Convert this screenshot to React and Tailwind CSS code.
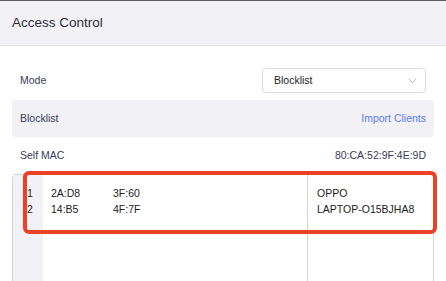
import React from 'react';

const clients = [
  { no: 1, head: '2A:D8', tail: '3F:60', name: 'OPPO' },
  { no: 2, head: '14:B5', tail: '4F:7F', name: 'LAPTOP-O15BJHA8' },
];

const App = () => {
  return (
    <div className="w-[446px] h-[281px] overflow-hidden bg-white font-['Liberation_Sans',Arial,sans-serif]">
      {/* Header */}
      <div className="h-[46px] border-t border-[#5a5a5e] border-b border-b-[#e6e6ea] bg-[#f2f2f6] flex items-center px-3">
        <span className="text-[13.5px] text-[#2e2e38]">Access Control</span>
      </div>

      <div className="px-3">
        {/* Mode */}
        <div className="h-[25px] mt-[22px] flex items-center justify-between pl-2 pr-2">
          <span className="text-[10.5px] text-[#3b3b5c]">Mode</span>
          <div className="w-[164px] h-[25px] border border-[#dcdce0] rounded-[4px] flex items-center justify-between pl-[11px] pr-[8px]">
            <span className="text-[10.5px] text-[#222]">Blocklist</span>
            <svg width="9" height="6" viewBox="0 0 9 6" fill="none" stroke="#b8b8c0" strokeWidth="1">
              <path d="M1 1l3.5 3.5L8 1" />
            </svg>
          </div>
        </div>

        {/* Blocklist band */}
        <div className="mt-[7px] h-[37px] rounded-[4px] bg-[#f1f1f6] flex items-center justify-between px-2">
          <span className="text-[10.5px] text-[#3b3b5c]">Blocklist</span>
          <span className="text-[10.5px] text-[#5b7cf7]">Import Clients</span>
        </div>

        {/* Self MAC */}
        <div className="h-[37px] flex items-center justify-between px-2">
          <span className="text-[10.5px] text-[#3b3b5c]">Self MAC</span>
          <span className="text-[10.5px] text-[#3b3b5c]">80:CA:52:9F:4E:9D</span>
        </div>

        {/* Client list */}
        <div className="relative h-[110px] border-l border-t border-r border-[#d4d4d8] rounded-t-[4px] flex">
          <div className="w-[30px] bg-[#f2f2f6] pt-[10px]">
            {clients.map(c => (
              <div key={c.no} className="h-[16px] text-[10.5px] text-[#222] pl-[14px] leading-[16px]">{c.no}</div>
            ))}
          </div>
          <div className="flex-1 pt-[10px] pl-[8px]">
            {clients.map(c => (
              <div key={c.no} className="h-[16px] flex text-[10.5px] text-[#222] leading-[16px]">
                <span className="w-[62px] whitespace-nowrap">{c.head}</span>
                <span className="whitespace-nowrap">{c.tail}</span>
              </div>
            ))}
          </div>
          <div className="w-[126px] border-l border-[#d4d4d8] pt-[10px] pl-[9px]">
            {clients.map(c => (
              <div key={c.no} className="h-[16px] text-[10.5px] text-[#222] leading-[16px]">{c.name}</div>
            ))}
          </div>

          {/* annotation */}
          <div className="absolute left-[10px] -right-[4px] -top-[4px] h-[63px] border-[4px] border-[#ea4128] rounded-[6px]" />
        </div>
      </div>
    </div>
  );
};

export default App;
